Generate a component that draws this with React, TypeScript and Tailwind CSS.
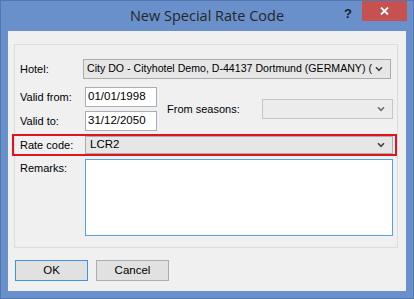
const FONT = "font-['Liberation_Sans','Arial',sans-serif]";

function Chevron({ color = "#404040" }: { color?: string }) {
  return (
    <svg width="8" height="6" viewBox="0 0 8 6" className="shrink-0">
      <polyline
        points="1,1.2 4,4.4 7,1.2"
        fill="none"
        stroke={color}
        strokeWidth="1.6"
      />
    </svg>
  );
}

function Combo({
  value,
  className,
  disabled,
}: {
  value?: string;
  className: string;
  disabled?: boolean;
}) {
  return (
    <div
      className={`flex items-center border pl-[3px] pr-[7px] ${
        disabled
          ? "border-[#c6c6c6] bg-[#ececec]"
          : "border-[#acacac] bg-[#e6e6e6]"
      } ${className}`}
    >
      <span className="flex-1 overflow-hidden whitespace-pre">{value}</span>
      <Chevron color={disabled ? "#6d6d6d" : "#404040"} />
    </div>
  );
}

function TextBox({ value }: { value: string }) {
  return (
    <div className="flex h-[20px] w-[72px] items-center border border-[#abadb3] bg-white pl-[2px] text-[11.5px]">
      {value}
    </div>
  );
}

export default function App() {
  return (
    <div
      className={`flex h-[299px] w-[414px] flex-col border border-[#5278b0] bg-[#6990ca] text-[11px] text-black ${FONT}`}
    >
      {/* caption */}
      <div className="grid h-[30px] grid-cols-[1fr_auto_1fr]">
        <div />
        <div className="pt-[4px] font-['Open_Sans',sans-serif] text-[14.5px] text-[#262626]">
          New Special Rate Code
        </div>
        <div className="flex items-start justify-end pr-[6px]">
          <span className="mr-[10px] mt-[3px] text-[13px] font-bold text-[#1e1e1e]">?</span>
          <div className="flex h-[20px] w-[45px] items-center justify-center bg-[#c75050]">
            <svg width="9" height="8" viewBox="0 0 9 8">
              <path d="M1 0.5 L8 7.5 M8 0.5 L1 7.5" stroke="white" strokeWidth="1.8" />
            </svg>
          </div>
        </div>
      </div>

      {/* client area */}
      <div className="mx-[7px] mb-[7px] flex-1 bg-[#f0f0f0]">
        <div className="ml-[6px] mt-[13px] h-[204px] w-[384px] border border-[#dcdcdc]">
          <div className="mt-[14px] flex items-center">
            <span className="w-[68px] pl-[5px]">Hotel:</span>
            <Combo
              className="h-[20px] w-[308px] text-[10.6px]"
              value="City DO - Cityhotel Demo, D-44137 Dortmund (GERMANY) ("
            />
          </div>

          <div className="mt-[8px] flex items-center">
            <div className="flex flex-col gap-[4px]">
              <div className="flex items-center">
                <span className="w-[70px] pl-[5px]">Valid from:</span>
                <TextBox value="01/01/1998" />
              </div>
              <div className="flex items-center">
                <span className="w-[70px] pl-[5px]">Valid to:</span>
                <TextBox value="31/12/2050" />
              </div>
            </div>
            <span className="ml-[10px] w-[95px]">From seasons:</span>
            <Combo className="h-[20px] w-[131px]" disabled />
          </div>

          <div className="-ml-[3px] mt-[3px] flex h-[22px] w-[385px] items-center border-2 border-[#e0141c]">
            <span className="w-[71px] pl-[6px]">Rate code:</span>
            <Combo className="h-[18px] w-[308px] pl-[4px] text-[11.5px]" value="LCR2" />
          </div>

          <div className="mt-[3px] flex">
            <span className="w-[70px] pl-[5px] pt-[1px]">Remarks:</span>
            <div className="h-[77px] w-[308px] border border-[#5a9ee6] bg-white" />
          </div>
        </div>

        <div className="ml-[7px] mt-[12px] flex gap-[8px] text-[11.5px]">
          <button className="h-[21px] w-[73px] border border-[#3c95e6] bg-[#e1e1e1]">
            OK
          </button>
          <button className="h-[21px] w-[73px] border border-[#adadad] bg-[#e1e1e1]">
            Cancel
          </button>
        </div>
      </div>
    </div>
  );
}
